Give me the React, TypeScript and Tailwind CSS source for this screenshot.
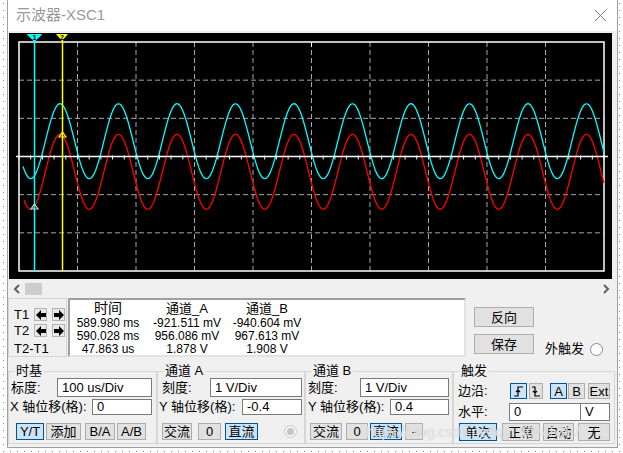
import React from 'react'

// screen geometry (svg coords, origin = top-left of black area)
const GX0 = 10
const GX1 = 595
const GY0 = 9
const GY1 = 238
const DX = (GX1 - GX0) / 10
const DY = (GY1 - GY0) / 6
const CY = GY0 + DY * 3

const wavePath = (cy: number, from: number) => {
  let d = ''
  for (let x = from; x <= GX1; x += 1) {
    const y = cy - 37.5 * Math.cos((2 * Math.PI * (x - 51)) / 58.5)
    d += `${x === from ? 'M' : 'L'}${x} ${y.toFixed(1)} `
  }
  return d
}

function Screen() {
  const vLines = Array.from({ length: 9 }, (_, i) => GX0 + DX * (i + 1))
  const hLines = [1, 2, 4, 5].map((i) => GY0 + DY * i)
  const ticks = Array.from({ length: 51 }, (_, i) => GX0 + (DX / 5) * i)
  return (
    <svg width="603" height="246" viewBox="0 0 603 246" className="block">
      <rect width="603" height="246" fill="#000" />
      {/* grid */}
      {vLines.map((x) => (
        <line key={x} x1={x} y1={GY0} x2={x} y2={GY1} stroke="#a8a8a8" strokeDasharray="5 3" />
      ))}
      {hLines.map((y) => (
        <line key={y} x1={GX0} y1={y} x2={GX1} y2={y} stroke="#a8a8a8" strokeDasharray="5 3" />
      ))}
      <rect x={GX0} y={GY0} width={GX1 - GX0} height={GY1 - GY0} fill="none" stroke="#fff" strokeWidth="1.5" />
      <line x1={302.5} y1={GY0} x2={302.5} y2={GY0 + 5} stroke="#fff" />
      {/* waves */}
      <path d={wavePath(CY + 15.3, 15)} fill="none" stroke="#ff0000" strokeWidth="1.3" />
      <path d={wavePath(CY - 15.3, 14)} fill="none" stroke="#00ffff" strokeWidth="1.3" />
      {/* centre axis */}
      <line x1={7} y1={CY} x2={599} y2={CY} stroke="#fff" strokeWidth="1.6" />
      {ticks.map((x) => (
        <line key={x} x1={x} y1={CY - 1} x2={x} y2={CY + 3} stroke="#fff" />
      ))}
      {/* cursors */}
      <line x1={25.5} y1={7} x2={25.5} y2={GY1} stroke="#00ffff" strokeWidth="1.5" />
      <line x1={53.5} y1={7} x2={53.5} y2={GY1} stroke="#ffff00" strokeWidth="1.5" />
      <polygon points="17.5,1 33.5,1 25.5,9" fill="#00ffff" />
      <text x="25.5" y="7" fontSize="8" fontWeight="bold" textAnchor="middle" fill="#000">1</text>
      <polygon points="47,1 59,1 53,8" fill="#ffff00" />
      <text x="53" y="6.5" fontSize="7" fontWeight="bold" textAnchor="middle" fill="#000">2</text>
      {/* markers */}
      <polygon points="53.5,99 57,104 50,104" fill="none" stroke="#ffff00" strokeWidth="1.2" />
      <polygon points="25.5,171 29,176 22,176" fill="none" stroke="#b0e0e0" strokeWidth="1.2" />
    </svg>
  )
}

function Btn({
  children,
  active = false,
  className = '',
}: {
  children: React.ReactNode
  active?: boolean
  className?: string
}) {
  return (
    <button
      className={`flex items-center justify-center border text-[13px] leading-none text-black ${
        active ? 'bg-[#cce4f7] border-[#005499]' : 'bg-[#e1e1e1] border-[#adadad]'
      } ${className}`}
    >
      {children}
    </button>
  )
}

function Field({ value, className = '' }: { value: string; className?: string }) {
  return (
    <div className={`flex items-center bg-white border border-[#7a7a7a] px-[4px] text-[13px] ${className}`}>
      {value}
    </div>
  )
}

function ArrowBtn({ dir }: { dir: 'l' | 'r' }) {
  return (
    <div className="w-[13px] h-[13px] border border-[#b4b4b4] bg-[#e8e8e8] flex items-center justify-center">
      <svg width="10" height="10" viewBox="0 0 10 10">
        <polygon
          points={dir === 'l' ? '0,5 5,0 5,3 10,3 10,7 5,7 5,10' : '10,5 5,0 5,3 0,3 0,7 5,7 5,10'}
          fill="#000"
        />
      </svg>
    </div>
  )
}

function Group({ title, width, children }: { title: string; width: string; children: React.ReactNode }) {
  return (
    <fieldset className={`${width} h-[80px] border border-[#d6d6d6] shrink-0`}>
      <legend className="ml-[5px] px-[2px] text-[13px] leading-[14px]">{title}</legend>
      {children}
    </fieldset>
  )
}

export default function App() {
  return (
    <div className="w-[623px] h-[453px] overflow-hidden bg-white bg-[radial-gradient(circle,#888_0.7px,transparent_1px)] bg-[length:7px_7px] font-['Liberation_Sans','Noto_Sans_CJK_SC',sans-serif] text-black">
      <div className="ml-[7px] w-[611px] h-[448px] border-x border-b border-[#a0a0a0] bg-[#f0f0f0] flex flex-col relative">
        {/* title bar */}
        <div className="h-[31px] bg-white flex items-center justify-between pl-[8px] pr-[10px]">
          <span className="text-[15px] text-[#999]">示波器-XSC1</span>
          <svg width="13" height="13" viewBox="0 0 13 13">
            <path d="M1 1 L12 12 M12 1 L1 12" stroke="#777" strokeWidth="1" />
          </svg>
        </div>

        {/* screen */}
        <div className="mt-[2px] ml-[1px] w-[603px] h-[246px]">
          <Screen />
        </div>

        {/* scroll bar */}
        <div className="h-[19px] flex items-center">
          <svg width="8" height="10" viewBox="0 0 8 10" className="ml-[5px]">
            <path d="M6 1 L2 5 L6 9" fill="none" stroke="#606060" strokeWidth="2" />
          </svg>
          <div className="ml-[4px] w-[17px] h-[12px] bg-[#cdcdcd]" />
          <div className="flex-1" />
          <svg width="8" height="10" viewBox="0 0 8 10" className="mr-[7px]">
            <path d="M2 1 L6 5 L2 9" fill="none" stroke="#606060" strokeWidth="2" />
          </svg>
        </div>

        {/* cursor readout row */}
        <div className="h-[59px] flex">
          <div className="w-[59px] border border-[#d4d4d4] text-[13px] pl-[5px] pt-[8px] flex flex-col">
            <div className="flex items-center h-[15px]">
              <span className="w-[20px]">T1</span>
              <ArrowBtn dir="l" />
              <div className="w-[5px]" />
              <ArrowBtn dir="r" />
            </div>
            <div className="flex items-center h-[15px] mt-[1px]">
              <span className="w-[20px]">T2</span>
              <ArrowBtn dir="l" />
              <div className="w-[5px]" />
              <ArrowBtn dir="r" />
            </div>
            <div className="mt-[4px] leading-[13px]">T2-T1</div>
          </div>

          <div className="ml-[1px] w-[398px] bg-white border-2 border-t-[#a0a0a0] border-l-[#a0a0a0] border-b-[#e3e3e3] border-r-[#e3e3e3] text-[12px]">
            <div className="grid grid-cols-[76px_82px_78px] text-center">
              <div className="text-[14px] leading-[15px] pt-[1px]">时间</div>
              <div className="text-[13px] leading-[15px] pt-[1px]">通道_A</div>
              <div className="text-[13px] leading-[15px] pt-[1px]">通道_B</div>
              <div className="leading-[14px]">589.980 ms</div>
              <div className="leading-[14px]">-921.511 mV</div>
              <div className="leading-[14px]">-940.604 mV</div>
              <div className="leading-[13px]">590.028 ms</div>
              <div className="leading-[13px]">956.086 mV</div>
              <div className="leading-[13px]">967.613 mV</div>
              <div className="leading-[13px]">47.863 us</div>
              <div className="leading-[13px]">1.878 V</div>
              <div className="leading-[13px]">1.908 V</div>
            </div>
          </div>

          <div className="ml-[8px] flex flex-col pt-[9px]">
            <Btn className="w-[60px] h-[20px] bg-[#e1e1e1]">反向</Btn>
            <Btn className="w-[60px] h-[20px] mt-[7px]">保存</Btn>
          </div>
          <div className="ml-[11px] flex items-end pb-[1px]">
            <span className="text-[13px] leading-[14px]">外触发</span>
            <div className="ml-[6px] w-[13px] h-[13px] rounded-full border border-[#8a8a8a] bg-white" />
          </div>
        </div>

        {/* settings groups */}
        <div className="mt-[7px] flex">
          <Group title="时基" width="w-[149px]">
            <div className="flex items-center h-[19px] text-[13px]">
              <span className="w-[48px] pl-[2px]">标度:</span>
              <Field value="100 us/Div" className="w-[95px] h-[19px]" />
            </div>
            <div className="flex items-center h-[16px] mt-[2px] text-[13px]">
              <span className="w-[83px] pl-[1px]">X 轴位移(格):</span>
              <Field value="0" className="w-[60px] h-[16px]" />
            </div>
            <div className="flex mt-[8px] h-[17px]">
              <Btn active className="ml-[7px] w-[28px]">Y/T</Btn>
              <Btn className="ml-[2px] w-[35px]">添加</Btn>
              <Btn className="ml-[4px] w-[30px]">B/A</Btn>
              <Btn className="ml-[2px] w-[29px]">A/B</Btn>
            </div>
          </Group>

          <Group title="通道 A" width="w-[148px]">
            <div className="flex items-center h-[19px] text-[13px]">
              <span className="w-[52px] pl-[4px]">刻度:</span>
              <Field value="1  V/Div" className="w-[92px] h-[19px]" />
            </div>
            <div className="flex items-center h-[16px] mt-[2px] text-[13px]">
              <span className="w-[84px] pl-[1px]">Y 轴位移(格):</span>
              <Field value="-0.4" className="w-[60px] h-[16px]" />
            </div>
            <div className="flex items-center mt-[8px] h-[17px]">
              <Btn className="ml-[4px] w-[30px] h-[17px]">交流</Btn>
              <Btn className="ml-[6px] w-[23px] h-[17px]">0</Btn>
              <Btn active className="ml-[4px] w-[33px] h-[17px]">直流</Btn>
              <div className="ml-[26px] w-[13px] h-[13px] rounded-full border border-[#c8c8c8] bg-[#f4f4f4] flex items-center justify-center">
                <div className="w-[7px] h-[7px] rounded-full bg-[#c4c4c4]" />
              </div>
            </div>
          </Group>

          <Group title="通道 B" width="w-[148px]">
            <div className="flex items-center h-[19px] text-[13px]">
              <span className="w-[54px] pl-[2px]">刻度:</span>
              <Field value="1  V/Div" className="w-[89px] h-[19px]" />
            </div>
            <div className="flex items-center h-[16px] mt-[2px] text-[13px]">
              <span className="w-[84px] pl-[2px]">Y 轴位移(格):</span>
              <Field value="0.4" className="w-[59px] h-[16px]" />
            </div>
            <div className="flex items-center mt-[8px] h-[17px]">
              <Btn className="ml-[4px] w-[32px] h-[17px]">交流</Btn>
              <Btn className="ml-[4px] w-[22px] h-[17px]">0</Btn>
              <Btn active className="ml-[2px] w-[32px] h-[17px]">直流</Btn>
              <Btn className="ml-[3px] w-[18px] h-[17px]">-</Btn>
            </div>
          </Group>

          <Group title="触发" width="w-[162px]">
            <div className="flex items-center h-[16px] mt-[5px] text-[13px]">
              <span className="w-[56px] pl-[4px]">边沿:</span>
              <Btn active className="w-[17px] h-[16px]">
                <svg width="11" height="11" viewBox="0 0 11 11">
                  <path d="M1 10 H5 V1 H10 M3 6 L5 4 L7 6" fill="none" stroke="#000" strokeWidth="1.2" />
                </svg>
              </Btn>
              <Btn className="ml-[2px] w-[14px] h-[16px]">
                <svg width="10" height="11" viewBox="0 0 10 11">
                  <path d="M1 1 H4 V10 H9 M2 5 L4 7 L6 5" fill="none" stroke="#000" strokeWidth="1.2" />
                </svg>
              </Btn>
              <Btn active className="ml-[7px] w-[17px] h-[16px]">A</Btn>
              <Btn className="ml-[1px] w-[17px] h-[16px]">B</Btn>
              <Btn className="ml-[3px] w-[22px] h-[16px]">Ext</Btn>
            </div>
            <div className="flex items-center h-[18px] mt-[4px] text-[13px]">
              <span className="w-[55px] pl-[4px]">水平:</span>
              <Field value="0" className="w-[72px] h-[18px]" />
              <Field value="V" className="w-[29px] h-[18px] border-l-0" />
            </div>
            <div className="flex items-center mt-[2px] h-[18px]">
              <Btn active className="ml-[5px] w-[38px] h-[18px]">单次</Btn>
              <Btn className="ml-[5px] w-[38px] h-[18px]">正常</Btn>
              <Btn className="ml-[3px] w-[31px] h-[18px]">自动</Btn>
              <Btn className="ml-[4px] w-[32px] h-[18px]">无</Btn>
            </div>
          </Group>
        </div>

        {/* watermark */}
        <div className="absolute left-[358px] top-[424px] text-[14px] leading-[16px] text-white/60 pointer-events-none whitespace-nowrap [text-shadow:0_0_1px_#b8b8b8]">
          https://blog.csdn.net/qq_40245387
        </div>
      </div>
    </div>
  )
}
